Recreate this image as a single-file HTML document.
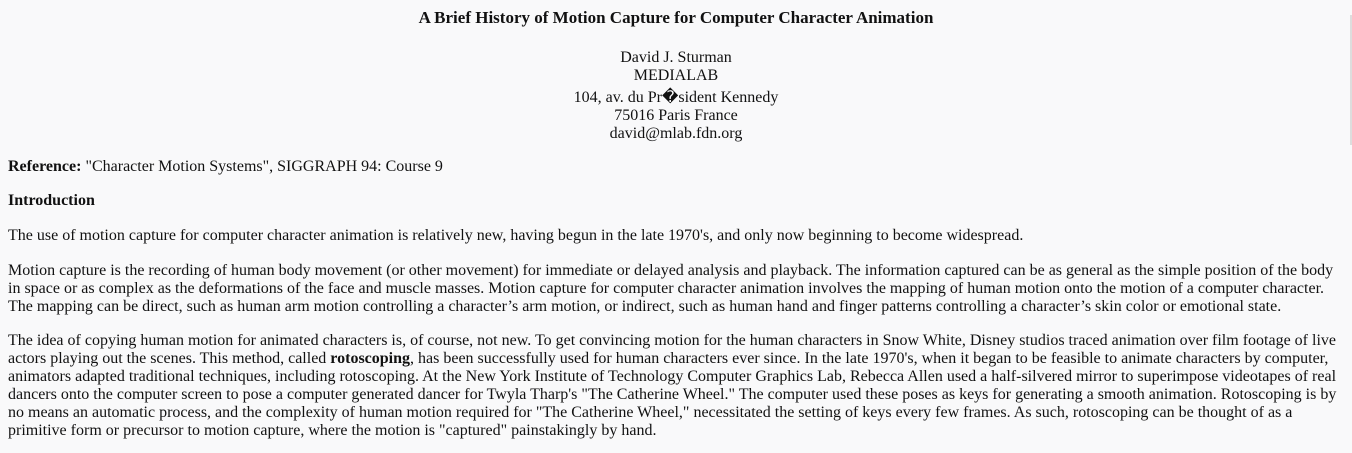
<!DOCTYPE html>
<html><head><meta charset="utf-8"><style>
html,body{margin:0;padding:0;background:#f9f9fa;}
body{font-family:"Liberation Serif","Times New Roman",serif;font-size:16px;line-height:18px;color:#111;width:1352px;height:453px;overflow:hidden;position:relative}
.l{position:absolute;left:8px;white-space:nowrap}
.c{position:absolute;left:0;width:1352px;text-align:center;white-space:nowrap}
b{font-weight:bold}
.sb{position:absolute;right:0;top:15px;width:2px;height:130px;background:#ddd}
</style></head><body>
<div class="c" style="top:9px;font-size:17px;font-weight:bold">A Brief History of Motion Capture for Computer Character Animation</div>
<div class="c" style="top:49px">David J. Sturman</div>
<div class="c" style="top:67px">MEDIALAB</div>
<div class="c" style="top:89px">104, av. du Pr�sident Kennedy</div>
<div class="c" style="top:107px">75016 Paris France</div>
<div class="c" style="top:125px">david@mlab.fdn.org</div>
<div class="l" style="top:158px"><b>Reference:</b> "Character Motion Systems", SIGGRAPH 94: Course 9</div>
<div class="l" style="top:192px"><b>Introduction</b></div>
<div class="l" style="top:227px">The use of motion capture for computer character animation is relatively new, having begun in the late 1970's, and only now beginning to become widespread.</div>
<div class="l" style="top:262px">Motion capture is the recording of human body movement (or other movement) for immediate or delayed analysis and playback. The information captured can be as general as the simple position of the body<br>in space or as complex as the deformations of the face and muscle masses. Motion capture for computer character animation involves the mapping of human motion onto the motion of a computer character.<br>The mapping can be direct, such as human arm motion controlling a character’s arm motion, or indirect, such as human hand and finger patterns controlling a character’s skin color or emotional state.</div>
<div class="l" style="top:332px">The idea of copying human motion for animated characters is, of course, not new. To get convincing motion for the human characters in Snow White, Disney studios traced animation over film footage of live<br>actors playing out the scenes. This method, called <b>rotoscoping</b>, has been successfully used for human characters ever since. In the late 1970's, when it began to be feasible to animate characters by computer,<br>animators adapted traditional techniques, including rotoscoping. At the New York Institute of Technology Computer Graphics Lab, Rebecca Allen used a half-silvered mirror to superimpose videotapes of real<br>dancers onto the computer screen to pose a computer generated dancer for Twyla Tharp's "The Catherine Wheel." The computer used these poses as keys for generating a smooth animation. Rotoscoping is by<br>no means an automatic process, and the complexity of human motion required for "The Catherine Wheel," necessitated the setting of keys every few frames. As such, rotoscoping can be thought of as a<br>primitive form or precursor to motion capture, where the motion is "captured" painstakingly by hand.</div>
<div class="sb"></div>
</body></html>
